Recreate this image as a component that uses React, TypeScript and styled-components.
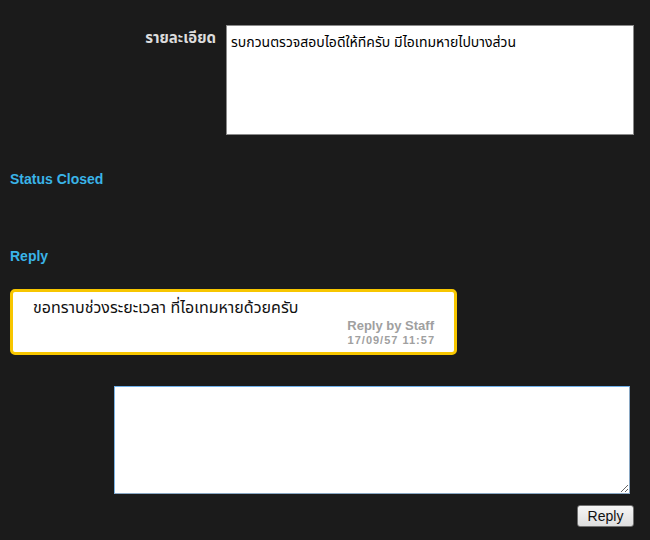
import React from "react"
import styled, { createGlobalStyle } from "styled-components"

const GlobalStyle = createGlobalStyle`
  html, body {
    margin: 0;
    padding: 0;
    background: #1b1b1b;
  }
  body {
    font-family: Tahoma, "Liberation Sans", "Noto Sans Thai", "Noto Sans", sans-serif;
  }
`

const Page = styled.div`
  width: 650px;
  height: 540px;
  box-sizing: border-box;
  padding: 25px 16px 0 10px;
  background: #1b1b1b;
  overflow: hidden;
`

const DetailRow = styled.div`
  display: grid;
  grid-template-columns: 206px 408px;
  align-items: start;
  column-gap: 10px;
`

const FieldLabel = styled.div`
  text-align: right;
  padding-top: 2px;
  font-size: 15px;
  font-weight: 700;
  color: #dcdcdc;
`

const DetailBox = styled.div`
  height: 110px;
  box-sizing: border-box;
  background: #fff;
  border: 1px solid #8a8a8a;
  padding: 8px 4px;
  font-size: 14px;
  color: #000;
  line-height: 17px;
`

const SectionTitle = styled.h3<{ $top: number }>`
  margin: ${(p) => p.$top}px 0 0;
  font-size: 14px;
  font-weight: 700;
  line-height: 17px;
  color: #3ab4e8;
`

const ReplyCard = styled.div`
  width: 447px;
  height: 66px;
  box-sizing: border-box;
  margin-top: 24px;
  background: #fff;
  border: 3px solid #f7c600;
  border-radius: 5px;
  padding: 5px 20px 0 20px;
`

const ReplyText = styled.div`
  font-size: 16px;
  line-height: 21px;
  color: #111;
`

const ReplyMeta = styled.div`
  text-align: right;
  font-weight: 700;
  color: #a0a0a0;
`

const MetaAuthor = styled.div`
  font-size: 13px;
  line-height: 15px;
`

const MetaDate = styled.div`
  font-size: 11px;
  line-height: 14px;
  letter-spacing: 1px;
  margin-right: -1px;
`

const ReplyForm = styled.div`
  margin-top: 31px;
  display: flex;
  flex-direction: column;
  align-items: flex-end;
`

const ReplyArea = styled.textarea`
  width: 516px;
  height: 108px;
  box-sizing: border-box;
  margin-right: 4px;
  border: 1px solid #8aa8c4;
  border-top-color: #6fb0ea;
  border-left-color: #7ab4e6;
  background: #fff;
  padding: 3px;
  font-family: inherit;
  font-size: 12px;
  outline: none;
  resize: both;
  display: block;
`

const SubmitButton = styled.button`
  margin-top: 11px;
  width: 57px;
  height: 22px;
  font-family: "Liberation Sans", Arial, sans-serif;
  font-size: 14px;
  color: #111;
  background: linear-gradient(#f6f6f6, #dedede);
  border: 1px solid #707070;
  border-radius: 3px;
  padding: 0;
  cursor: pointer;
`

export default function App() {
  return (
    <Page>
      <GlobalStyle />
      <DetailRow>
        <FieldLabel>รายละเอียด</FieldLabel>
        <DetailBox>รบกวนตรวจสอบไอดีให้ทีครับ มีไอเทมหายไปบางส่วน</DetailBox>
      </DetailRow>

      <SectionTitle $top={36}>Status Closed</SectionTitle>
      <SectionTitle $top={60}>Reply</SectionTitle>

      <ReplyCard>
        <ReplyText>ขอทราบช่วงระยะเวลา ที่ไอเทมหายด้วยครับ</ReplyText>
        <ReplyMeta>
          <MetaAuthor>Reply by Staff</MetaAuthor>
          <MetaDate>17/09/57 11:57</MetaDate>
        </ReplyMeta>
      </ReplyCard>

      <ReplyForm>
        <ReplyArea />
        <SubmitButton>Reply</SubmitButton>
      </ReplyForm>
    </Page>
  )
}
